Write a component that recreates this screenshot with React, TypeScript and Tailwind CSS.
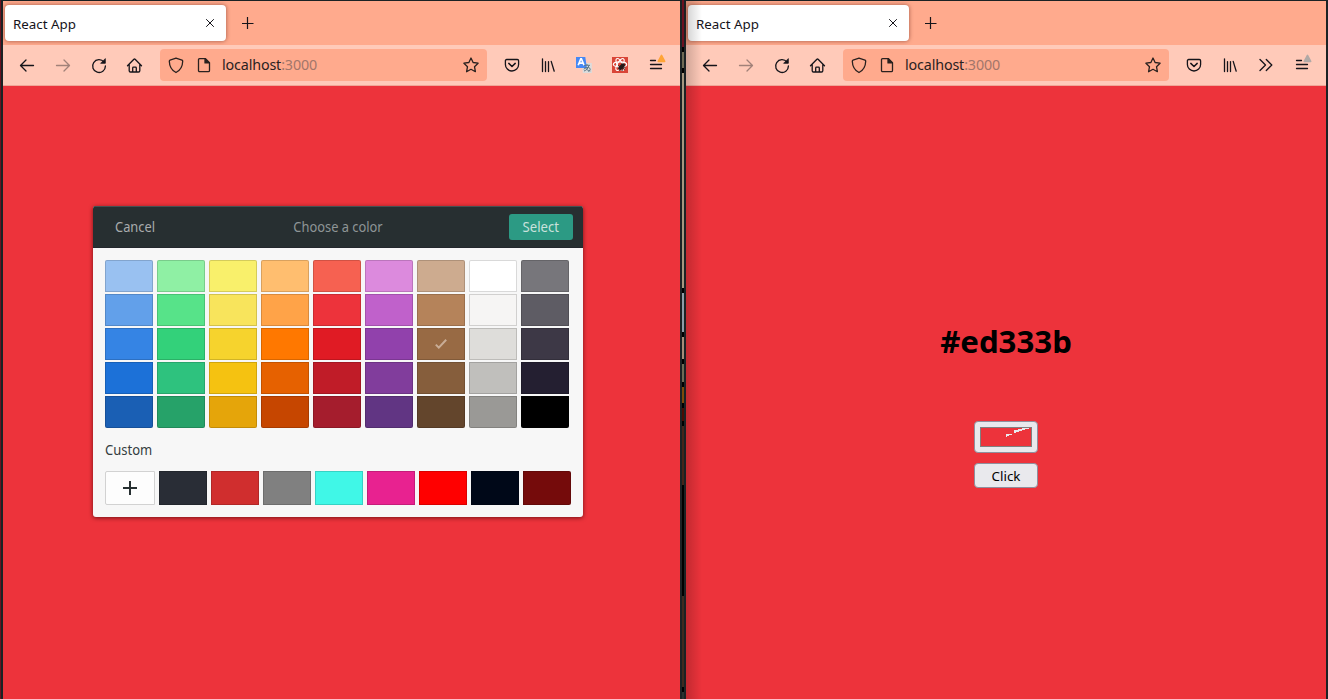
import React from 'react';

type IconProps = { children: React.ReactNode; className?: string };

function Icon({ children, className = '' }: IconProps) {
  return (
    <svg
      width="16"
      height="16"
      viewBox="0 0 16 16"
      fill="none"
      stroke="currentColor"
      strokeWidth="1.3"
      strokeLinecap="round"
      strokeLinejoin="round"
      className={`shrink-0 overflow-visible ${className}`}
    >
      {children}
    </svg>
  );
}

function Slot({ children }: { children: React.ReactNode }) {
  return <div className="flex w-9 shrink-0 items-center justify-center">{children}</div>;
}

const BackIcon = () => (
  <Icon>
    <path d="M1.6 8.5H14.5M7 3 1.5 8.5 7 14" />
  </Icon>
);
const ForwardIcon = () => (
  <Icon className="opacity-40">
    <path d="M1.5 8.5H14.4M9 3l5.5 5.5L9 14" />
  </Icon>
);
const ReloadIcon = () => (
  <Icon>
    <path d="M13 5.1A6.4 6.4 0 1 0 14.4 9" />
    <path d="M14.3 2v4.3H10z" fill="currentColor" strokeWidth="0.8" />
  </Icon>
);
const HomeIcon = () => (
  <Icon>
    <path d="M.5 8.8 6.9 2.3a.9.9 0 0 1 1.2 0L14.5 8.8M2.2 7.6v6.1c0 .8.5 1.3 1.3 1.3h8c.8 0 1.3-.5 1.3-1.3V7.6M5.7 15v-4c0-.5.3-.8.8-.8h2c.5 0 .8.3.8.8v4" />
  </Icon>
);
const ShieldIcon = () => (
  <Icon>
    <path d="M8 1.1 14 3.2c.5.2.7.5.7 1C14.6 9.2 12 13.4 8 15.5 4 13.4 1.4 9.2 1.3 4.2c0-.5.2-.8.7-1z" />
  </Icon>
);
const PageIcon = () => (
  <Icon>
    <path d="M3.6 1.6h5.9l4 4v7.9c0 .8-.5 1.2-1.2 1.2H3.6c-.7 0-1.1-.4-1.1-1.2V2.8c0-.8.4-1.2 1.1-1.2z" />
    <path d="M9 1.8v4.1h4.2z" fill="currentColor" />
  </Icon>
);
const StarIcon = () => (
  <Icon>
    <path d="m8 1 2.1 4.5 5 .7-3.6 3.5.9 5L8 12.3l-4.4 2.4.9-5L.9 6.2l5-.7z" />
  </Icon>
);
const PocketIcon = () => (
  <Icon>
    <path d="M2.7 2.5h10.6c.8 0 1.3.5 1.3 1.3v3.6a6.6 6.6 0 0 1-13.2 0V3.8c0-.8.5-1.3 1.3-1.3z" />
    <path d="M4.8 6.4 8 9.5l3.2-3.1" strokeWidth="1.5" />
  </Icon>
);
const LibraryIcon = () => (
  <Icon>
    <path d="M2.5 1.8v12.7M5.5 4.6v9.9M8.5 4.6v9.9M11.2 4.4l3 9.8" />
  </Icon>
);
const OverflowIcon = () => (
  <Icon>
    <path d="M2 2.5 7.5 8 2 13.5M8.3 2.5 13.8 8l-5.5 5.5" />
  </Icon>
);

function MenuIcon({ badge }: { badge: string }) {
  return (
    <Icon>
      <path d="M2.5 3.5h5M2.5 7.5h11M2.5 11.5h11" />
      <path d="M13.5-1.6 16.7 4.4h-6.4z" fill={badge} stroke={badge} strokeWidth="1.6" />
    </Icon>
  );
}

function TranslateIcon() {
  return (
    <svg width="16" height="16" viewBox="0 0 16 16" className="shrink-0">
      <path d="M6 6h9.8v10H6.8z" fill="#dcdcdc" />
      <path d="M0 0h9.3l1.6 11H0z" fill="#4688f4" />
      <path d="m2.2 8.2 2.6-6.4h.6L8 8.2M3.1 6.2h4" fill="none" stroke="#fff" strokeWidth="1.7" />
      <path
        d="M8 8.3h6M11 7v1.2M12.8 8.5c-.5 3-2.5 5-4.8 5.5M9 10.2c1 2 3 3.5 5.3 3.8M8 12.4c0-2 6.2-3 6.2-.2 0 1.2-1 2-2 2.2"
        fill="none"
        stroke="#607988"
        strokeWidth="1"
      />
    </svg>
  );
}

function ReactBugIcon() {
  return (
    <svg width="16" height="16" viewBox="0 0 16 16" className="shrink-0">
      <rect width="16" height="16" fill="#d94537" />
      <g fill="none" stroke="#fff" strokeWidth="1.1">
        <ellipse cx="8" cy="7.5" rx="6.7" ry="2.6" />
        <ellipse cx="8" cy="7.5" rx="6.7" ry="2.6" transform="rotate(60 8 7.5)" />
        <ellipse cx="8" cy="7.5" rx="6.7" ry="2.6" transform="rotate(120 8 7.5)" />
      </g>
      <ellipse cx="9.6" cy="9.6" rx="2" ry="4" transform="rotate(45 9.6 9.6)" fill="#251817" />
      <path
        d="m6 8.5 7 4M7.5 13.6l5.3-5.8M9.8 6.5l.3 7.5M6.2 11l7-1"
        stroke="#251817"
        strokeWidth=".9"
      />
    </svg>
  );
}

function Browser({
  actions,
  children,
}: {
  actions: React.ReactNode;
  children: React.ReactNode;
}) {
  return (
    <>
      <div className="flex h-11 shrink-0 items-start bg-[#ffaa8d] pl-[2px] pt-1">
        <div className="flex h-9 w-[221px] items-center justify-between rounded-[4px] bg-white pl-2 pr-[11px] shadow-[0_0_4px_rgba(80,20,10,0.55)]">
          <span className="pt-[2px] text-[13.33px] leading-5 text-[#15141a]">React App</span>
          <svg width="10" height="10" viewBox="0 0 10 10" className="mb-[1px]">
            <path d="m1.2 1.2 7.6 7.6M8.8 1.2 1.2 8.8" stroke="#15141a" strokeWidth="1" />
          </svg>
        </div>
        <svg width="12" height="12" viewBox="0 0 12 12" className="ml-4 mt-3">
          <path d="M5.5 0v12M0 6.5h11.5" stroke="#15141a" strokeWidth="1.2" />
        </svg>
      </div>
      <div className="flex h-[41px] shrink-0 items-center border-b border-[#f0a697] bg-[#ffcab9] pl-[6px] pr-[6px] text-[#15141a]">
        <Slot><BackIcon /></Slot>
        <Slot><ForwardIcon /></Slot>
        <Slot><ReloadIcon /></Slot>
        <Slot><HomeIcon /></Slot>
        <div className="mx-[7px] flex h-8 min-w-0 flex-1 items-center rounded-[4px] bg-[#ffaa8d] px-2 text-[#2a211f]">
          <ShieldIcon />
          <div className="ml-3 flex"><PageIcon /></div>
          <div className="ml-[10px] flex-1 text-[14.3px] leading-5 tracking-[-0.14px]">
            localhost<span className="text-[#a2766a]">:3000</span>
          </div>
          <StarIcon />
        </div>
        {actions}
      </div>
      {children}
    </>
  );
}

const palette: string[][] = [
  ['#99c1f1', '#8ff0a4', '#f9f06b', '#ffbe6f', '#f66151', '#dc8add', '#cdab8f', '#ffffff', '#77767b'],
  ['#62a0ea', '#57e389', '#f8e45c', '#ffa348', '#ed333b', '#c061cb', '#b5835a', '#f6f5f4', '#5e5c64'],
  ['#3584e4', '#33d17a', '#f6d32d', '#ff7800', '#e01b24', '#9141ac', '#986a44', '#deddda', '#3d3846'],
  ['#1c71d8', '#2ec27e', '#f5c211', '#e66100', '#c01c28', '#813d9c', '#865e3c', '#c0bfbc', '#241f31'],
  ['#1a5fb4', '#26a269', '#e5a50a', '#c64600', '#a51d2d', '#613583', '#63452c', '#9a9996', '#000000'],
];

const custom = ['#292d36', '#d02e2e', '#808080', '#40f7e7', '#e82290', '#ff0000', '#000818', '#750b0b'];

function ColorDialog() {
  return (
    <div className="mt-[120px] ml-[90px] h-[311px] w-[490px] overflow-hidden rounded-[3px] bg-[#f7f7f7] text-[14.3px] shadow-[0_1px_4px_rgba(50,0,0,0.65)]">
      <div className="grid h-[42px] grid-cols-[84px_1fr_84px] items-center border-t border-b border-t-[#465052] border-b-[#23272d] bg-[#272f31]">
        <span className="ml-[22px] origin-left scale-x-[0.9] text-[#a9acad]">Cancel</span>
        <span className="scale-x-[0.9] text-center text-[#8e9596]">Choose a color</span>
        <button className="mr-[10px] flex h-[26px] w-16 items-center justify-center justify-self-end rounded-[3px] bg-[#2c9a84] pr-[1px] text-[#cae1dc]">
          <span className="scale-x-[0.92]">Select</span>
        </button>
      </div>
      <div className="grid grid-cols-[repeat(9,48px)] gap-x-1 gap-y-[2px] px-3 pt-3">
        {palette.map((row, r) =>
          row.map((color, c) => (
            <div
              key={color}
              style={{ backgroundColor: color }}
              className={`flex h-8 items-center justify-center border border-black/15 ${
                r === 0 ? 'rounded-t-[2px]' : r === 4 ? 'rounded-b-[2px]' : ''
              }`}
            >
              {r === 2 && c === 6 && (
                <svg width="12" height="10" viewBox="0 0 12 10">
                  <path d="m.8 5.6 3 3L11.2.8" fill="none" stroke="#c9ad96" strokeWidth="2" />
                </svg>
              )}
            </div>
          )),
        )}
      </div>
      <div className="mt-3 ml-3 origin-left scale-x-[0.91] leading-5 text-[#343d40]">Custom</div>
      <div className="mt-[11px] flex gap-1 pl-3">
        <div className="flex h-[34px] w-[50px] items-center justify-center rounded-l-[2px] border border-[#d2d2d2] bg-[#fdfdfd]">
          <svg width="14" height="14" viewBox="0 0 14 14">
            <path d="M7 0v14M0 7h14" stroke="#272f31" strokeWidth="2" />
          </svg>
        </div>
        {custom.map((color) => (
          <div
            key={color}
            style={{ backgroundColor: color }}
            className="h-[34px] w-12 border border-black/15 last:rounded-r-[2px]"
          />
        ))}
      </div>
    </div>
  );
}

export default function App() {
  return (
    <div className="flex h-[699px] w-[1328px] overflow-hidden bg-[#1b2224] font-['Noto_Sans',sans-serif]">
      <div className="w-px shrink-0 bg-[#6b1220]" />
      <section className="ml-[2px] mt-px flex w-[677px] shrink-0 flex-col bg-[#ed333b]">
        <Browser
          actions={
            <>
              <Slot><PocketIcon /></Slot>
              <Slot><LibraryIcon /></Slot>
              <Slot><TranslateIcon /></Slot>
              <Slot><ReactBugIcon /></Slot>
              <Slot><MenuIcon badge="#ffa436" /></Slot>
            </>
          }
        >
          <ColorDialog />
        </Browser>
      </section>
      <div className="mx-[2px] flex w-[2px] shrink-0 flex-col gap-[5px] bg-black">
        <div className="h-[47px] bg-[#6b1220]" />
        <div className="h-[16px] bg-[#6e6a55]" />
        <div className="h-[215px] bg-[#a5967f]" />
        <div className="h-[39px] bg-[#8f9ca6]" />
        <div className="h-[22px] bg-[#a58c78]" />
        <div className="h-[18px] bg-[#6e6a55]" />
        <div className="h-[16px] bg-[#7d4a0c]" />
        <div className="h-[13px] bg-[#4a0d04]" />
        <div className="h-[59px] bg-[#45251b]" />
        <div className="mt-[106px] h-[91px] bg-[#3f2a20]" />
        <div className="flex-1 bg-[#2b3230]" />
      </div>
      <section className="relative mt-px flex w-[640px] shrink-0 flex-col bg-[#ed333b]">
        <Browser
          actions={
            <>
              <Slot><PocketIcon /></Slot>
              <Slot><LibraryIcon /></Slot>
              <Slot><OverflowIcon /></Slot>
              <Slot><MenuIcon badge="#b1a9a6" /></Slot>
            </>
          }
        >
          <main className="flex flex-col items-center pt-[233px]">
            <h1 className="text-[31.2px] font-bold leading-[44px] text-black">#ed333b</h1>
            <div className="mt-[58px] h-8 w-16 rounded-[4px] border border-[#8f8f9d] bg-[#e9e9ed] p-[5px]">
              <div className="h-5 w-[52px] border border-[#808080] bg-[#ed333b]">
                <svg width="50" height="18" viewBox="0 0 50 18" shapeRendering="crispEdges">
                  <path
                    d="M25 6h6v1h-3v1h-2v1h-1zM33 2h4V1h4v2h-3v1h-3v1h-2zM41 0h7v1h-4v1h-3z"
                    fill="#e9e9ed"
                  />
                </svg>
              </div>
            </div>
            <button className="mt-[10px] flex h-[25px] w-16 items-center justify-center rounded-[4px] border border-[#8f8f9d] bg-[#e9e9ed] pt-[2px] text-[13.33px] text-black">
              Click
            </button>
          </main>
        </Browser>
        <div className="pointer-events-none absolute inset-y-0 left-0 w-4 bg-linear-to-r from-black/18 to-transparent" />
      </section>
    </div>
  );
}
